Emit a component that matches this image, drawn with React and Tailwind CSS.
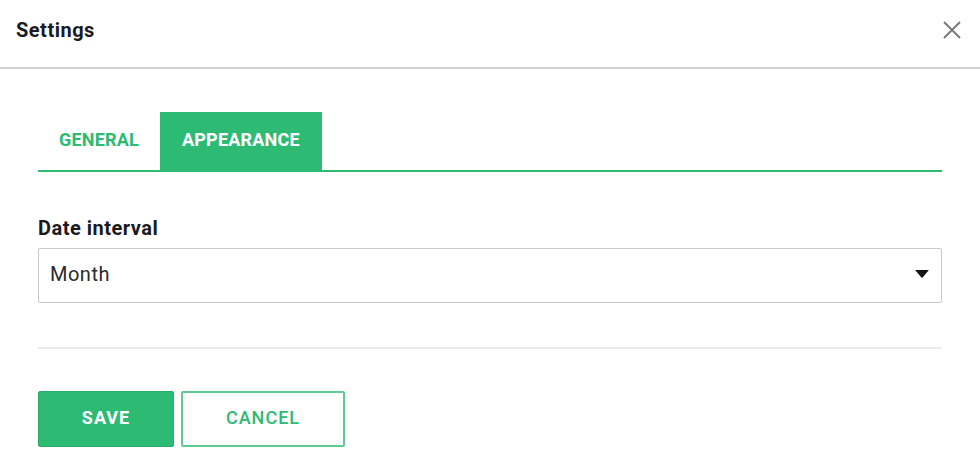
export default function App() {
  return (
    <div className="w-[980px] h-[469px] bg-white font-['Roboto',sans-serif] text-[#1b1b1f] overflow-hidden">
      {/* Header */}
      <div className="h-[69px] flex items-center justify-between pl-[16px] pr-[18px] border-b-2 border-[#cfcfcf] pb-[8px]">
        <h1 className="text-[20px] font-bold tracking-[0.5px]">Settings</h1>
        <button className="text-[#7a7a7a]" aria-label="Close">
          <svg width="20" height="20" viewBox="0 0 20 20" fill="none" stroke="currentColor" strokeWidth="2">
            <path d="M2 2 L18 18 M18 2 L2 18" />
          </svg>
        </button>
      </div>

      <div className="px-[38px]">
        {/* Tabs */}
        <div className="mt-[43px] flex border-b-2 border-[#2dbb74]">
          <button className="h-[58px] px-[21px] pb-[3px] text-[18px] font-bold text-[#2dbb74] tracking-[0.2px]">
            GENERAL
          </button>
          <button className="h-[58px] px-[22px] pb-[3px] text-[18px] font-bold text-white bg-[#2dbb74] tracking-[0.2px]">
            APPEARANCE
          </button>
        </div>

        {/* Field */}
        <label className="block mt-[44px] text-[20px] font-bold leading-[24px] tracking-[0.5px]">Date interval</label>
        <div className="mt-[8px] h-[55px] border border-[#c8c8c8] rounded-[2px] flex items-center justify-between pl-[11px] pr-[12px] pb-[3px]">
          <span className="text-[20px] text-[#2a2a2a] tracking-[0.5px]">Month</span>
          <svg width="14" height="8" viewBox="0 0 14 8" fill="#111">
            <path d="M0 0.5 Q0 0 0.8 0 H13.2 Q14 0 13.5 0.6 L7.6 7.4 Q7 8 6.4 7.4 L0.5 0.6 Z" />
          </svg>
        </div>

        <div className="mt-[44px] border-t-2 border-[#ececec]" />

        {/* Actions */}
        <div className="mt-[42px] flex gap-[7px]">
          <button className="w-[136px] h-[56px] pb-[3px] rounded-[2px] bg-[#2dbb74] border border-[#27ad6a] text-white text-[18px] font-bold tracking-[1px]">
            SAVE
          </button>
          <button className="w-[164px] h-[56px] pb-[3px] rounded-[2px] bg-white border-2 border-[#5fcb93] text-[#2dbb74] text-[18px] font-medium tracking-[1px]">
            CANCEL
          </button>
        </div>
      </div>
    </div>
  );
}
